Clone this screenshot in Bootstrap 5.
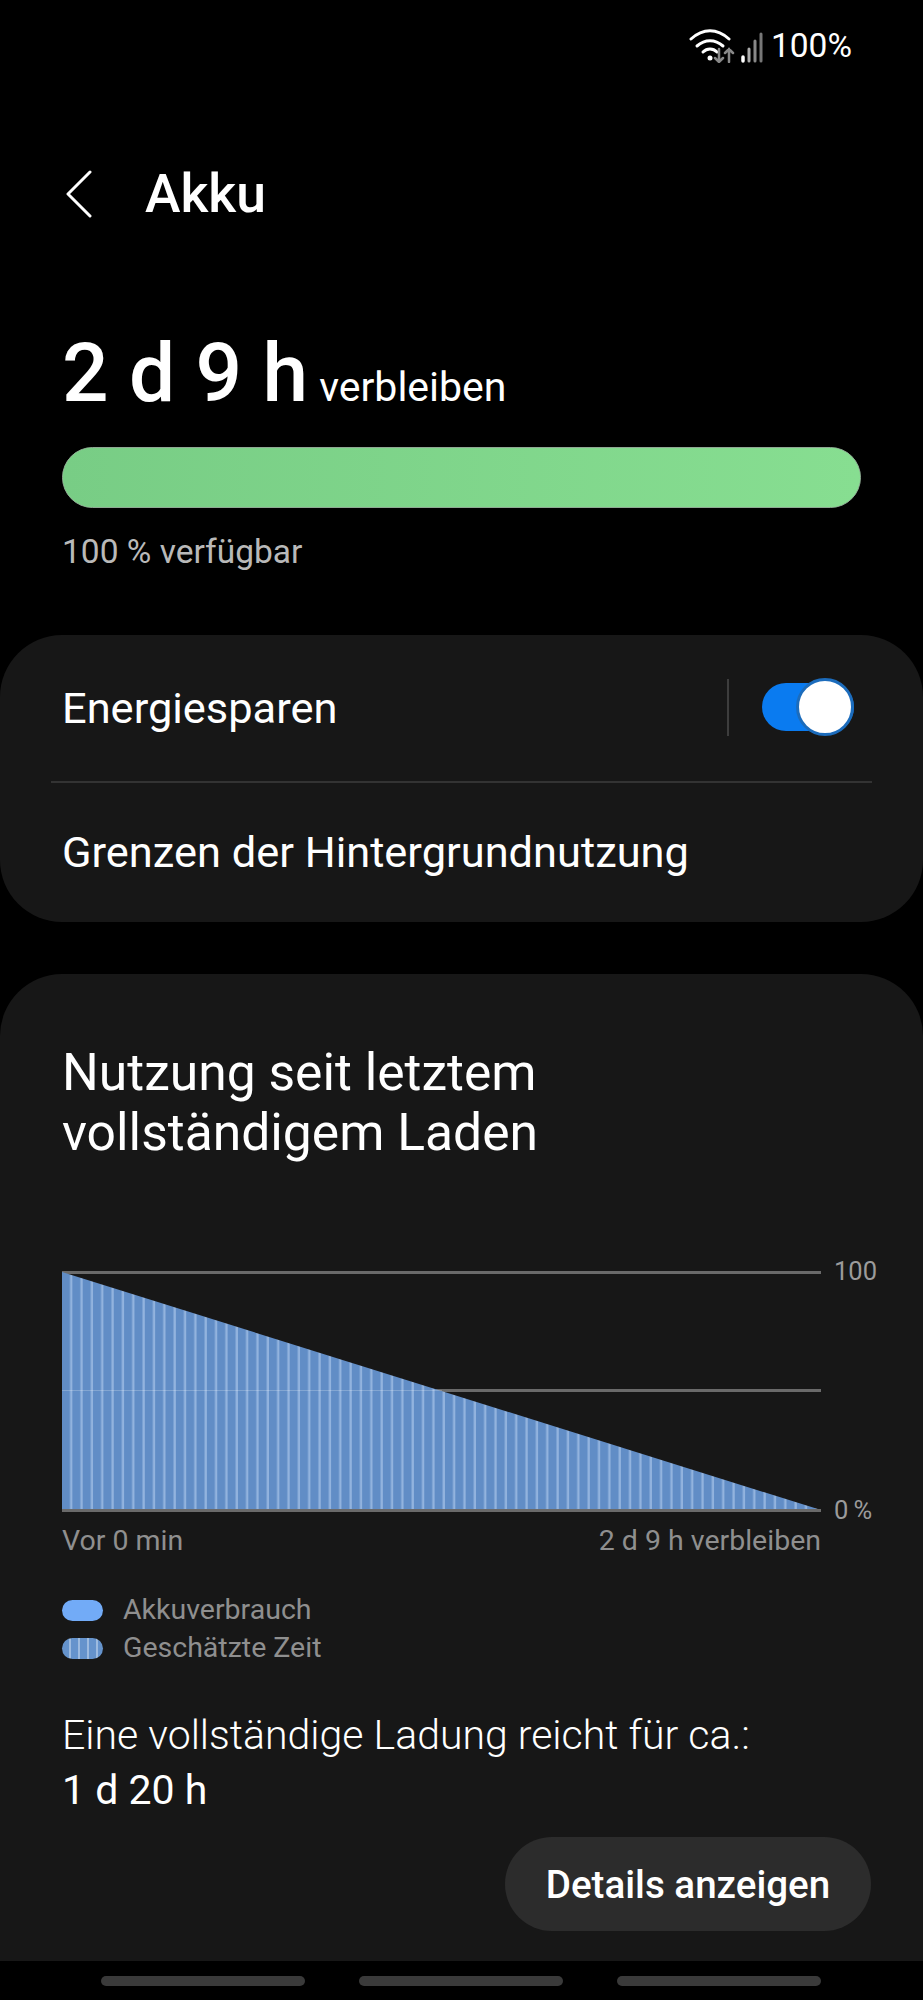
<!doctype html>
<html lang="de">
<head>
  <meta charset="utf-8">
  <meta name="viewport" content="width=device-width, initial-scale=1">
  <title>Akku</title>
  <link href="https://cdn.jsdelivr.net/npm/bootstrap@5.3.3/dist/css/bootstrap.min.css" rel="stylesheet">
  <style>
    body { background: #000; color: #fff; font-family: Roboto, "Liberation Sans", sans-serif; height: 2000px; overflow: hidden; }
    .statusbar { height: 92px; padding-right: 71px; font-size: 33.5px; }
    .titlebar { height: 136px; padding-left: 66px; margin-top: 34px; }
    .titlebar h1 { font-size: 53.5px; font-weight: 500; margin: 0 0 0 53px; }
    .summary { padding: 0 62px; height: 373px; }
    .remaining { font-size: 82px; font-weight: 500; line-height: 1; padding-top: 70px; height: 170px; white-space: nowrap; }
    .remaining span { font-size: 41px; font-weight: 400; margin-left: 11px; }
    .akkubar { height: 61px; border-radius: 31px; background: #84dc8f; border: 1px solid #8fa893; margin-top: 15px; }
    .akkubar .progress-bar { background: linear-gradient(90deg, #78cd85, #87de91); }
    .verfuegbar { font-size: 33.5px; color: #b9b9b9; margin-top: 26px; line-height: 36px; }
    .panel { background: #171717; border: 0; color: #fff; border-radius: 62px; }
    .panel-top { height: 287px; margin-bottom: 52px; font-size: 43.4px; }
    .panel-row { padding: 0 69px 0 62px; height: 146px; }
    .panel-row.unten { height: 139px; }
    .panel-row > span { padding-top: 2px; }
    .rule { border-top: 2px solid #333; margin: 0 51px; }
    .schalter-box { padding-bottom: 2px; }
    .vrule { width: 2px; height: 57px; background: #3d3d3d; margin-right: 33px; }
    .schalter { width: 92px; height: 48px; border-radius: 24px; background: #0a7bf0; margin: 0; }
    .schalter i { width: 58px; height: 58px; flex: none; border-radius: 50%; background: #fff; border: 3px solid #1c6cbc; display: block; margin: -5px 0; }
    .panel-usage { height: 987px; padding: 69px 0 0 62px; border-radius: 62px 62px 0 0; }
    .panel-usage h2 { font-size: 51.6px; font-weight: 400; line-height: 60px; margin: 0; }
    .chartwrap { margin-top: 108px; }
    .chartwrap svg { display: block; }
    .ylabels { height: 264px; margin: -12px 0 -10px 13px; font-size: 25.5px; color: #9b9b9b; line-height: 1; }
    .xlabels { width: 759px; font-size: 28.5px; color: #8f8f8f; margin-top: 12px; line-height: 32px; }
    .legende { margin-top: 34px; font-size: 28.5px; color: #8f8f8f; line-height: 38px; }
    .swatch { width: 41px; height: 21px; border-radius: 11px; margin-right: 20px; }
    .swatch.voll { background: #72abf7; }
    .swatch.streifen { background: repeating-linear-gradient(90deg, #6593cc 0 7px, #9dbbe0 7px 9px); }
    .ladung { margin-top: 45px; font-size: 41px; font-weight: 300; line-height: 46px; white-space: nowrap; }
    .ladung b { display: block; font-size: 41px; font-weight: 400; margin-top: 9px; }
    .details { background: #2c2c2c; color: #fff; border: 0; font-size: 38.6px; font-weight: 500; width: 366px; height: 94px; margin: 0 52px 0 0; padding: 2px 0 0; }
    .details:hover { background: #2c2c2c; color: #fff; }
    .aktion { margin-top: auto; padding-bottom: 30px; }
    .navbar-pills { height: 39px; padding: 15px 102px 0 101px; }
    .navbar-pills i { display: block; width: 204px; height: 10px; border-radius: 5px; background: #3a3a3a; }
  </style>
</head>
<body>

  <!-- Statusleiste -->
  <div class="statusbar d-flex justify-content-end align-items-center">
    <svg width="74" height="34" viewBox="0 0 74 34" class="me-2" fill="none" stroke-linecap="round">
      <path d="M2 10C14 -1 28 -1 40 10" stroke="#fff" stroke-width="3"/>
      <path d="M8 17C16 10 26 10 34 17" stroke="#fff" stroke-width="3"/>
      <path d="M14 23C18 19 24 19 28 23" stroke="#fff" stroke-width="3"/>
      <circle cx="21" cy="29" r="2.5" fill="#fff"/>
      <path d="M30 20V33M26 29L30 33L34 29M40 33V20M36 24L40 20L44 24" stroke="#888" stroke-width="2.5"/>
      <path d="M54 32V28" stroke="#fff" stroke-width="3.5"/>
      <path d="M60 32V20" stroke="#aaa" stroke-width="3"/>
      <path d="M66 32V12" stroke="#888" stroke-width="3"/>
      <path d="M72 32V5" stroke="#777" stroke-width="3"/>
    </svg>
    <span>100%</span>
  </div>

  <!-- Titel -->
  <div class="titlebar d-flex align-items-center">
    <svg width="26" height="48" viewBox="0 0 26 48" fill="none">
      <path d="M24 2L2 24L24 46" stroke="#fff" stroke-width="3" stroke-linecap="round" stroke-linejoin="round"/>
    </svg>
    <h1>Akku</h1>
  </div>

  <!-- Restlaufzeit -->
  <div class="summary">
    <div class="remaining">2 d 9 h<span>verbleiben</span></div>
    <div class="progress akkubar"><div class="progress-bar w-100"></div></div>
    <div class="verfuegbar">100 % verfügbar</div>
  </div>

  <!-- Einstellungen -->
  <div class="card panel panel-top">
    <div class="panel-row d-flex align-items-center justify-content-between">
      <span>Energiesparen</span>
      <div class="schalter-box d-flex align-items-center">
        <div class="vrule"></div>
        <div class="schalter d-flex justify-content-end align-items-center"><i></i></div>
      </div>
    </div>
    <div class="rule"></div>
    <div class="panel-row unten d-flex align-items-center">Grenzen der Hintergrundnutzung</div>
  </div>

  <!-- Nutzung -->
  <div class="card panel panel-usage">
    <h2>Nutzung seit letztem<br>vollständigem Laden</h2>

    <div class="chartwrap d-flex">
      <svg width="759" height="242" viewBox="0 0 759 242">
        <defs>
          <pattern id="streifen" width="10.35" height="242" patternUnits="userSpaceOnUse">
            <rect width="10.35" height="242" fill="#618dc6"/>
            <rect x="8" width="2.8" height="242" fill="#92b3de"/>
          </pattern>
        </defs>
        <rect y="0" width="759" height="3" fill="#6a6a6a"/>
        <rect y="118" width="759" height="3" fill="#6a6a6a"/>
        <polygon points="0,1 759,239 0,239" fill="url(#streifen)"/>
        <rect y="119" width="380" height="1" fill="#fff" opacity=".22"/>
        <rect y="238" width="759" height="3" fill="#6a6a6a"/>
      </svg>
      <div class="ylabels d-flex flex-column justify-content-between">
        <span>100</span>
        <span>0&#8201;%</span>
      </div>
    </div>

    <div class="xlabels d-flex justify-content-between">
      <span>Vor 0 min</span>
      <span>2 d 9 h verbleiben</span>
    </div>

    <div class="legende">
      <div class="d-flex align-items-center"><span class="swatch voll"></span>Akkuverbrauch</div>
      <div class="d-flex align-items-center"><span class="swatch streifen"></span>Geschätzte Zeit</div>
    </div>

    <div class="ladung">
      Eine vollständige Ladung reicht für ca.:
      <b>1 d 20 h</b>
    </div>

    <div class="aktion d-flex justify-content-end">
      <button class="btn details rounded-pill" type="button">Details anzeigen</button>
    </div>
  </div>

  <!-- Navigationsleiste -->
  <div class="navbar-pills d-flex justify-content-between">
    <i></i><i></i><i></i>
  </div>

  <script src="https://cdn.jsdelivr.net/npm/bootstrap@5.3.3/dist/js/bootstrap.bundle.min.js"></script>
</body>
</html>
